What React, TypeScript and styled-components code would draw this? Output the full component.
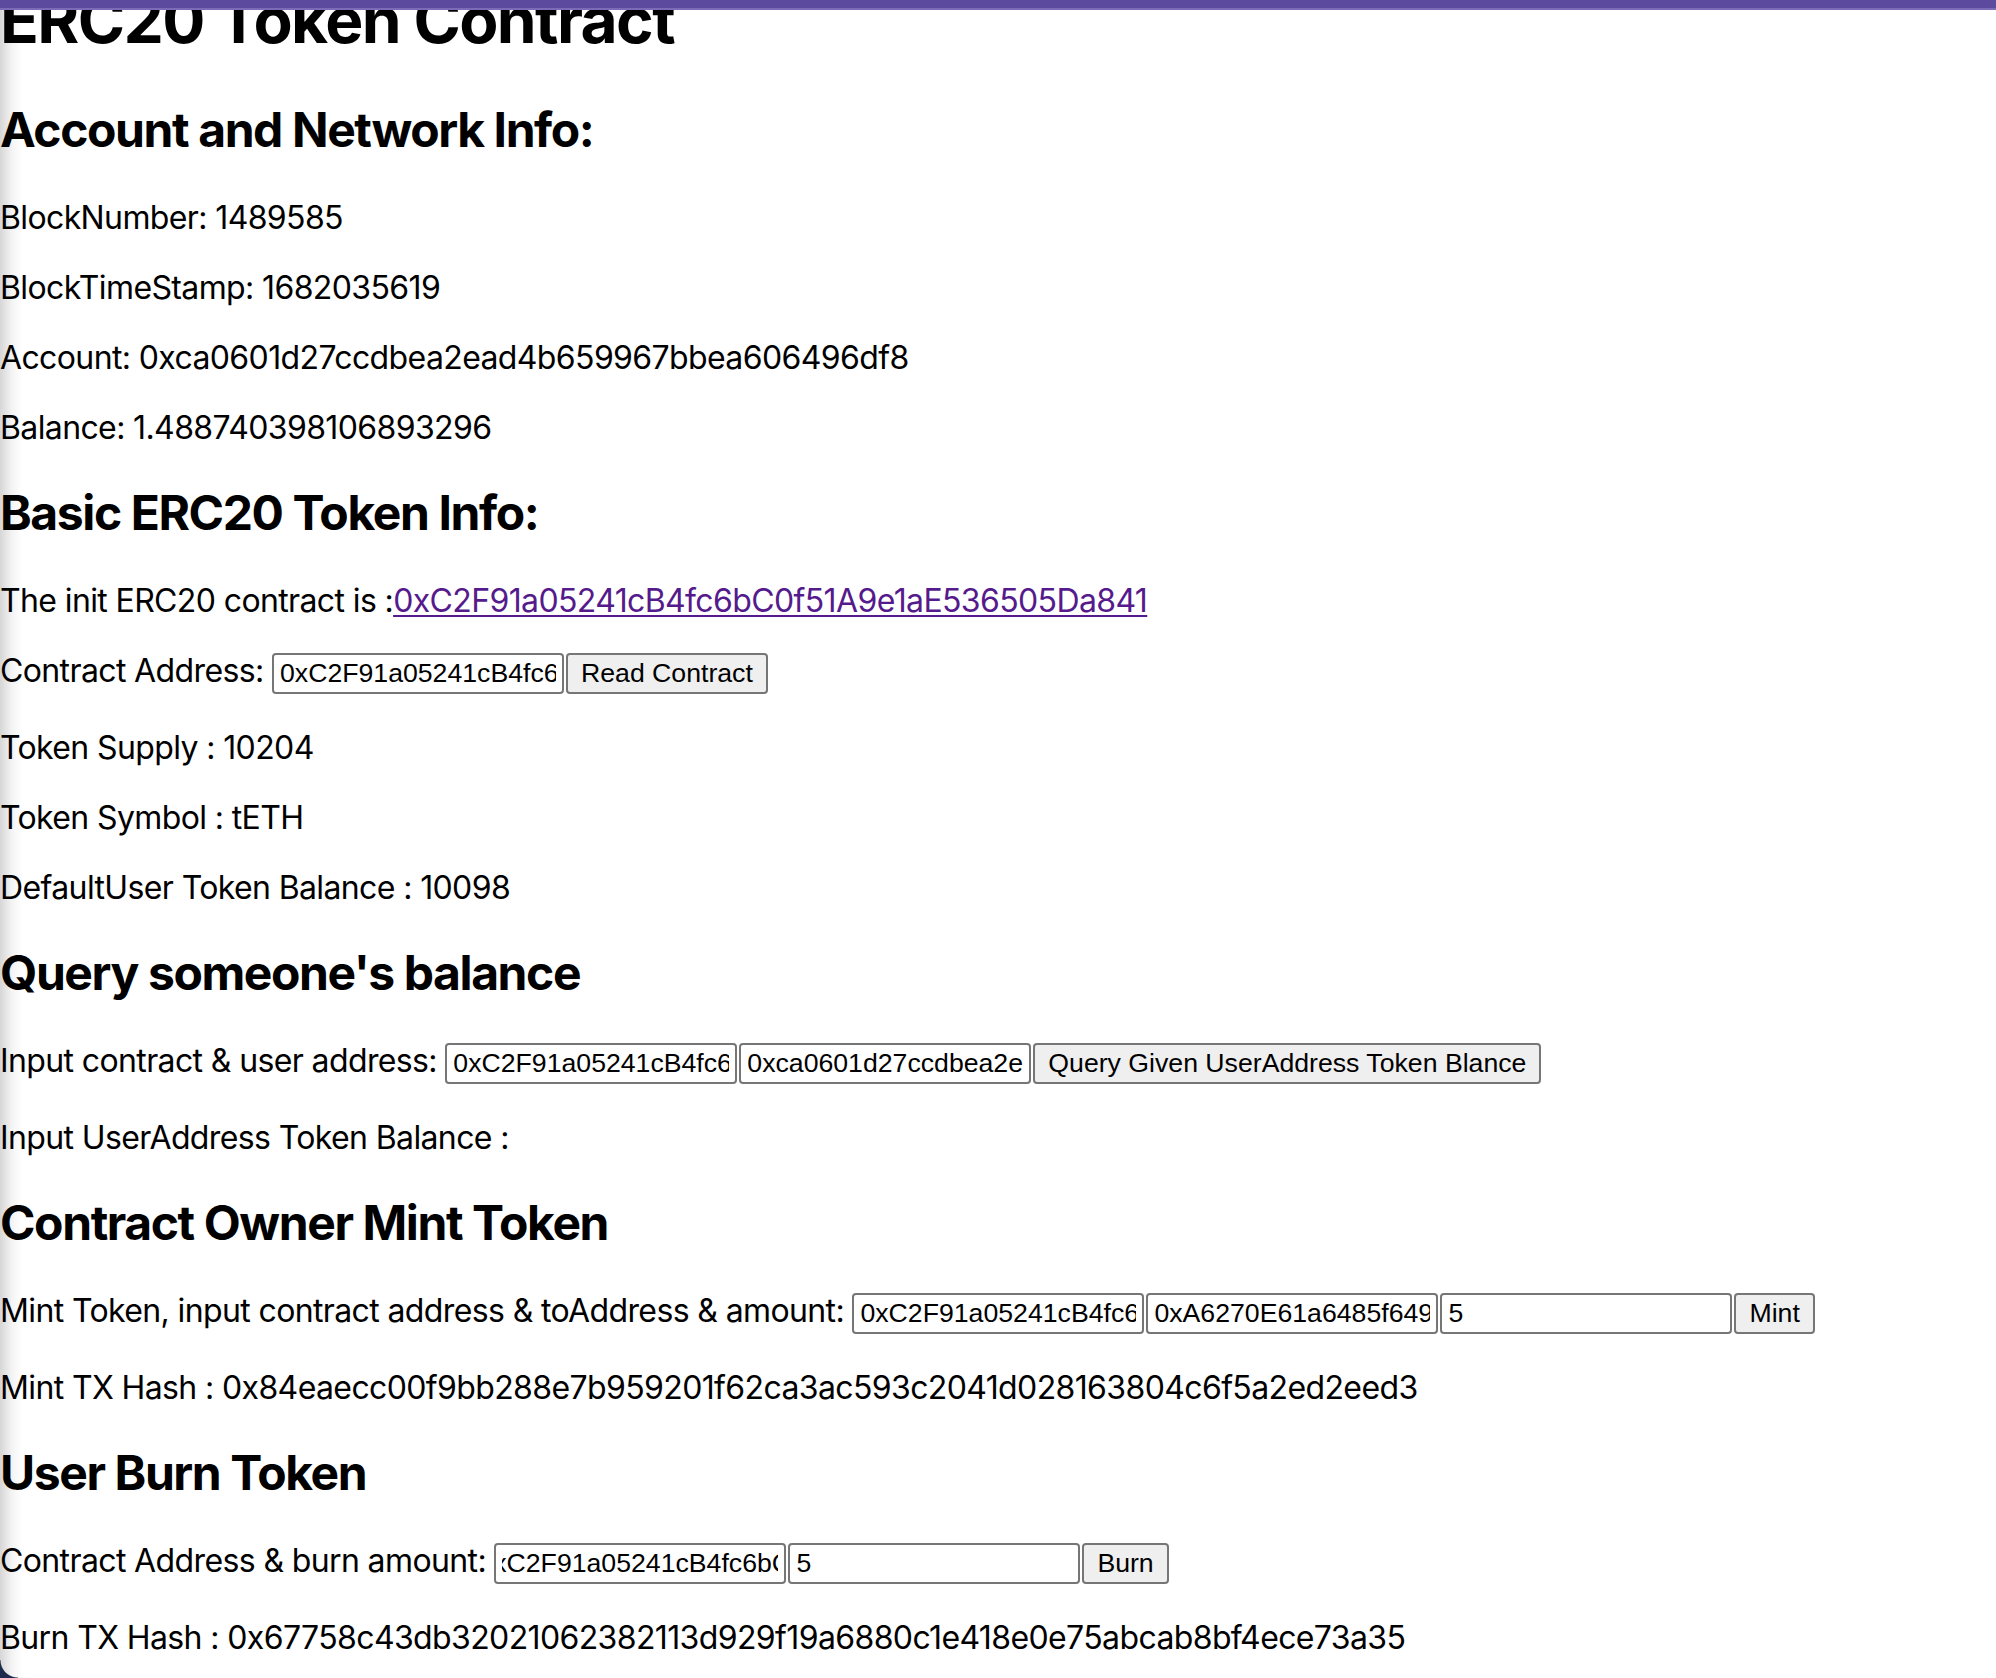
import React, { useLayoutEffect, useRef } from 'react'
import styled, { createGlobalStyle } from 'styled-components'

const GlobalStyle = createGlobalStyle`
  html, body {
    margin: 0;
    padding: 0;
  }
  body {
    font-family: Inter, "Noto Sans", sans-serif;
    color: #000;
    background: linear-gradient(to right, #d6d6d6 0, #f4f4f4 12px, #fff 22px) fixed;
    min-height: 100vh;
    overflow: hidden;
  }
`

const TopBar = styled.div`
  position: fixed;
  top: 0;
  left: 0;
  right: 0;
  height: 8px;
  background: #5c4a9f;
  border-bottom: 2px solid #7b6cb5;
  z-index: 2;
`

const Corner = styled.div`
  position: fixed;
  left: 0;
  bottom: 0;
  width: 18px;
  height: 18px;
  background: radial-gradient(circle at 100% 0, transparent 17px, #1e2b4d 18px);
  z-index: 2;
`

const Page = styled.main`
  margin-top: -62px;
  padding: 0;
`

const Title = styled.h1`
  font-size: 64px;
  font-weight: 700;
  line-height: 77px;
  letter-spacing: -1.6px;
  margin: 43px 0;
`

const SectionTitle = styled.h2`
  font-size: 48px;
  font-weight: 700;
  line-height: 58px;
  letter-spacing: -1.4px;
  margin: 37px 0 40px;
`

const Line = styled.p<{ $form?: boolean }>`
  font-size: 32px;
  line-height: 38px;
  letter-spacing: -0.62px;
  margin: 32px 0 ${(p) => (p.$form ? 35 : 32)}px;
  white-space: nowrap;
`

const ExplorerLink = styled.a`
  color: #551a8b;
  text-decoration: underline;
  text-decoration-thickness: 2px;
  text-underline-offset: 3px;
`

const Field = styled.input`
  box-sizing: border-box;
  width: 292px;
  height: 41px;
  margin: 0 2px 0 0;
  padding: 0 6px;
  border: 2px solid #767676;
  border-radius: 4px;
  background: #fff;
  color: #000;
  font-family: "Liberation Sans", Arial, sans-serif;
  font-size: 26.67px;
  letter-spacing: 0;
  vertical-align: baseline;
  outline: none;
`

const Action = styled.button`
  box-sizing: border-box;
  height: 41px;
  margin: 0;
  padding: 0 13px;
  border: 2px solid #767676;
  border-radius: 4px;
  background: #efefef;
  color: #000;
  font-family: "Liberation Sans", Arial, sans-serif;
  font-size: 26.67px;
  letter-spacing: 0;
  vertical-align: baseline;
`

const CONTRACT = '0xC2F91a05241cB4fc6bC0f51A9e1aE536505Da841'
const ACCOUNT = '0xca0601d27ccdbea2ead4b659967bbea606496df8'
const TO_ADDRESS = '0xA6270E61a6485f649D3a1e0bC5a7fE4b71d2C90a'

function ScrolledField({ value, offset }: { value: string; offset: number }) {
  const ref = useRef<HTMLInputElement>(null)
  useLayoutEffect(() => {
    if (ref.current) ref.current.scrollLeft = offset
  }, [offset])
  return <Field ref={ref} defaultValue={value} />
}

export default function App() {
  return (
    <>
      <GlobalStyle />
      <TopBar />
      <Corner />
      <Page>
        <Title>ERC20 Token Contract</Title>

        <SectionTitle>Account and Network Info:</SectionTitle>
        <Line>BlockNumber: 1489585</Line>
        <Line>BlockTimeStamp: 1682035619</Line>
        <Line>Account: {ACCOUNT}</Line>
        <Line>Balance: 1.488740398106893296</Line>

        <SectionTitle>Basic ERC20 Token Info:</SectionTitle>
        <Line>
          The init ERC20 contract is :<ExplorerLink href="#">{CONTRACT}</ExplorerLink>
        </Line>
        <Line $form>
          Contract Address: <Field defaultValue={CONTRACT} />
          <Action>Read Contract</Action>
        </Line>
        <Line>Token Supply : 10204</Line>
        <Line>Token Symbol : tETH</Line>
        <Line>DefaultUser Token Balance : 10098</Line>

        <SectionTitle>Query someone's balance</SectionTitle>
        <Line $form>
          Input contract &amp; user address: <Field defaultValue={CONTRACT} />
          <Field defaultValue={ACCOUNT} />
          <Action>Query Given UserAddress Token Blance</Action>
        </Line>
        <Line>Input UserAddress Token Balance :</Line>

        <SectionTitle>Contract Owner Mint Token</SectionTitle>
        <Line $form>
          Mint Token, input contract address &amp; toAddress &amp; amount:{' '}
          <Field defaultValue={CONTRACT} />
          <Field defaultValue={TO_ADDRESS} />
          <Field defaultValue="5" />
          <Action>Mint</Action>
        </Line>
        <Line>Mint TX Hash : 0x84eaecc00f9bb288e7b959201f62ca3ac593c2041d028163804c6f5a2ed2eed3</Line>

        <SectionTitle>User Burn Token</SectionTitle>
        <Line $form>
          Contract Address &amp; burn amount: <ScrolledField value={CONTRACT} offset={24} />
          <Field defaultValue="5" />
          <Action>Burn</Action>
        </Line>
        <Line>Burn TX Hash : 0x67758c43db32021062382113d929f19a6880c1e418e0e75abcab8bf4ece73a35</Line>
      </Page>
    </>
  )
}
